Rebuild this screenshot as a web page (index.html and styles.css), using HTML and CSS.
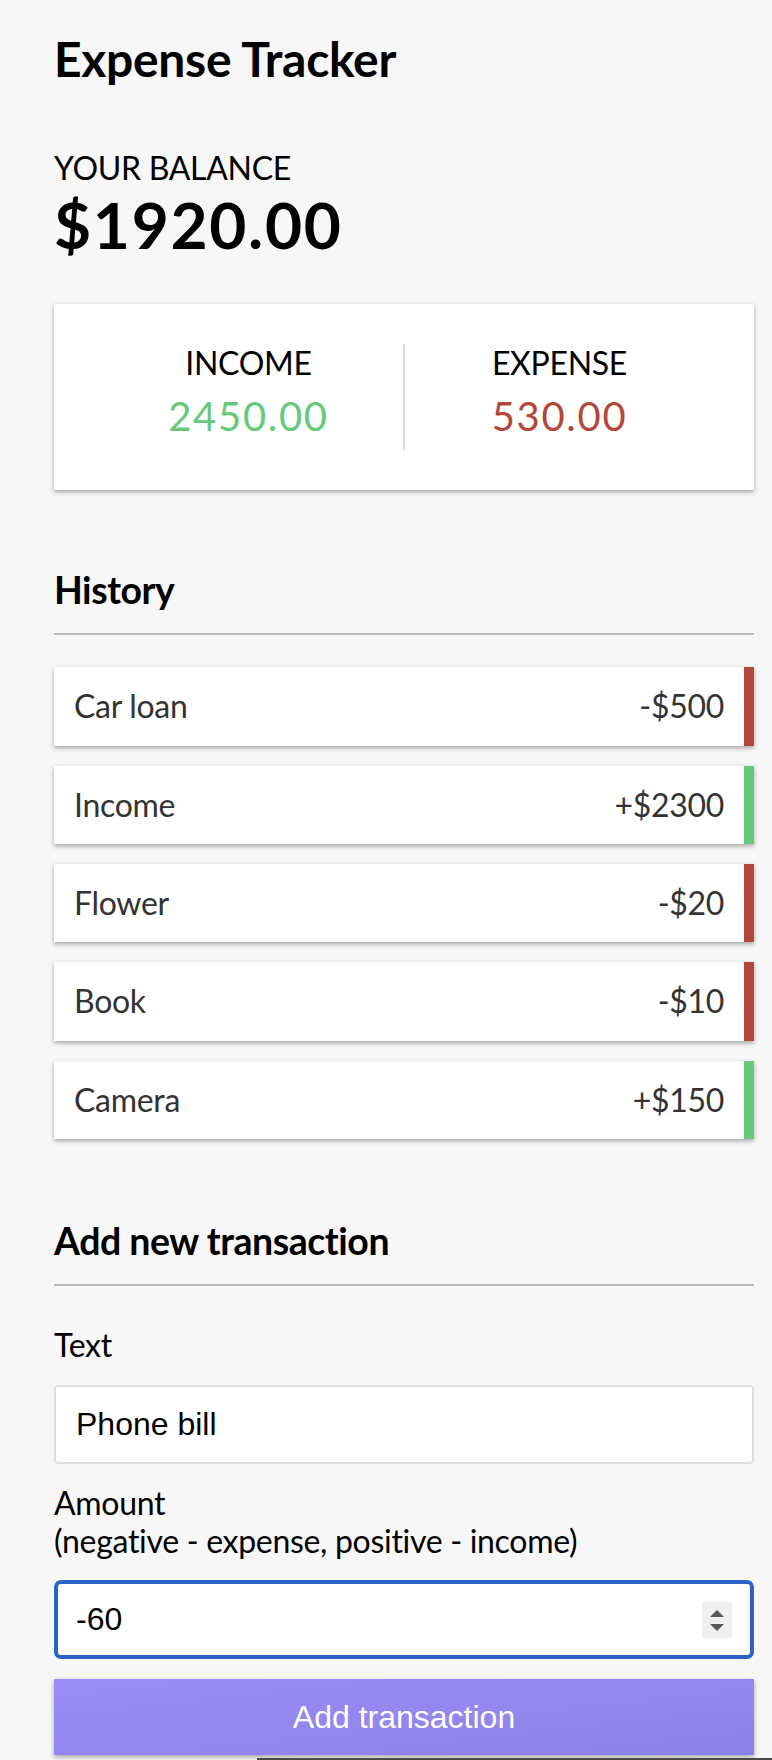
FILE: index.html
```html
<!DOCTYPE html>
<html lang="en">
<head>
<meta charset="utf-8">
<title>Expense Tracker</title>
<link rel="stylesheet" href="styles.css">
</head>
<body>
  <div class="container">
    <h2 class="title">Expense Tracker</h2>

    <h4 class="caps">Your Balance</h4>
    <h1 class="balance">$1920.00</h1>

    <div class="inc-exp">
      <div class="inc-exp-col divided">
        <h4 class="caps">Income</h4>
        <p class="money plus">2450.00</p>
      </div>
      <div class="inc-exp-col">
        <h4 class="caps">Expense</h4>
        <p class="money minus">530.00</p>
      </div>
    </div>

    <h3 class="section">History</h3>
    <ul class="list">
      <li class="item minus"><span>Car loan</span><span>-$500</span></li>
      <li class="item plus"><span>Income</span><span>+$2300</span></li>
      <li class="item minus"><span>Flower</span><span>-$20</span></li>
      <li class="item minus"><span>Book</span><span>-$10</span></li>
      <li class="item plus"><span>Camera</span><span>+$150</span></li>
    </ul>

    <h3 class="section">Add new transaction</h3>
    <form class="form">
      <div class="form-control">
        <label class="label" for="text">Text</label>
        <input class="field" type="text" id="text" value="Phone bill">
      </div>
      <div class="form-control">
        <label class="label" for="amount">Amount <br>(negative - expense, positive - income)</label>
        <div class="field-wrap">
          <input class="field focused" type="number" id="amount" value="-60">
          <span class="spinner"><span class="tri up"></span><span class="tri down"></span></span>
        </div>
      </div>
      <button class="btn" type="button">Add transaction</button>
    </form>
  </div>
  <div class="edge-line"></div>
</body>
</html>
```

FILE: styles.css
```css
* {
  box-sizing: border-box;
}

html,
body {
  margin: 0;
  padding: 0;
}

body {
  background-color: #f7f7f7;
  font-family: "Lato", "Open Sans", sans-serif;
  font-size: 32px;
  letter-spacing: -0.3px;
  color: #000;
  min-height: 1760px;
}

.container {
  width: 700px;
  margin: 0 0 0 54px;
  padding-top: 30px;
}

.title {
  font-size: 48px;
  font-weight: 700;
  line-height: 57.6px;
  letter-spacing: -0.3px;
  margin: 0 0 61px;
}

.caps {
  margin: 0;
  font-size: 32px;
  font-weight: 400;
  line-height: 38.4px;
  text-transform: uppercase;
}

.balance {
  margin: 0;
  font-size: 64px;
  font-weight: 700;
  line-height: 76.8px;
  letter-spacing: 1.7px;
}

.inc-exp {
  background-color: #fff;
  box-shadow: 0 2px 6px rgba(0, 0, 0, 0.12), 0 2px 4px rgba(0, 0, 0, 0.24);
  padding: 40px;
  display: flex;
  margin: 40px 0;
}

.inc-exp-col {
  flex: 1;
  text-align: center;
}

.divided {
  border-right: 2px solid #dedede;
}

.money {
  font-size: 40px;
  line-height: 48px;
  letter-spacing: 1.7px;
  margin: 10px 0;
}

.money.plus {
  color: #66c97a;
}

.money.minus {
  color: #b4463a;
}

.section {
  font-size: 37.44px;
  font-weight: 700;
  line-height: 44.93px;
  letter-spacing: -0.45px;
  border-bottom: 2px solid #bbb;
  padding-bottom: 20px;
  margin: 78px 0 20px;
}

.list {
  list-style: none;
  padding: 0;
  margin: 32px 0 80px;
}

.item {
  background-color: #fff;
  box-shadow: 0 2px 6px rgba(0, 0, 0, 0.12), 0 2px 4px rgba(0, 0, 0, 0.24);
  color: #333;
  display: flex;
  justify-content: space-between;
  padding: 20px;
  margin: 20px 0;
  line-height: 38.4px;
}

.item:first-child {
  margin-top: 0;
}

.item.plus {
  border-right: 10px solid #66c97a;
}

.item.minus {
  border-right: 10px solid #b4463a;
}

.form {
  margin: 0;
}

.form-control {
  line-height: 38.4px;
}

.label {
  display: inline-block;
  margin: 20px 0;
}

.field-wrap {
  position: relative;
}

.field {
  display: block;
  width: 100%;
  height: 79px;
  border: 2px solid #dedede;
  border-radius: 4px;
  background: #fff;
  font-family: "Liberation Sans", Arial, sans-serif;
  font-size: 32px;
  letter-spacing: 0;
  color: #000;
  padding: 0 20px;
  margin: 0;
  outline: none;
}

.field.focused {
  border: 4px solid #2a63c8;
  border-radius: 7px;
  box-shadow: 0 0 0 1px #ffffff;
  padding: 0 18px;
}

.field::-webkit-inner-spin-button,
.field::-webkit-outer-spin-button {
  -webkit-appearance: none;
  margin: 0;
}

.spinner {
  position: absolute;
  right: 22px;
  top: 22px;
  width: 30px;
  height: 36px;
  background: #efefef;
  border-radius: 2px;
  display: flex;
  flex-direction: column;
  align-items: center;
  justify-content: center;
  gap: 7px;
}

.tri {
  width: 0;
  height: 0;
  border-left: 7.5px solid transparent;
  border-right: 7.5px solid transparent;
}

.tri.up {
  border-bottom: 7.5px solid #585858;
}

.tri.down {
  border-top: 7.5px solid #585858;
}

.btn {
  display: block;
  width: 100%;
  height: 76px;
  margin: 20px 0 60px;
  padding: 0;
  border: 0;
  color: #fff;
  font-family: "Liberation Sans", Arial, sans-serif;
  font-size: 32px;
  letter-spacing: 0;
  background: linear-gradient(to bottom right, #9b8cf6, #8c81e6);
  box-shadow: 0 2px 6px rgba(0, 0, 0, 0.12), 0 2px 4px rgba(0, 0, 0, 0.24);
  cursor: pointer;
}

.edge-line {
  position: absolute;
  left: 257px;
  right: 0;
  top: 1758px;
  height: 2px;
  background: #4a4a4a;
}
```
